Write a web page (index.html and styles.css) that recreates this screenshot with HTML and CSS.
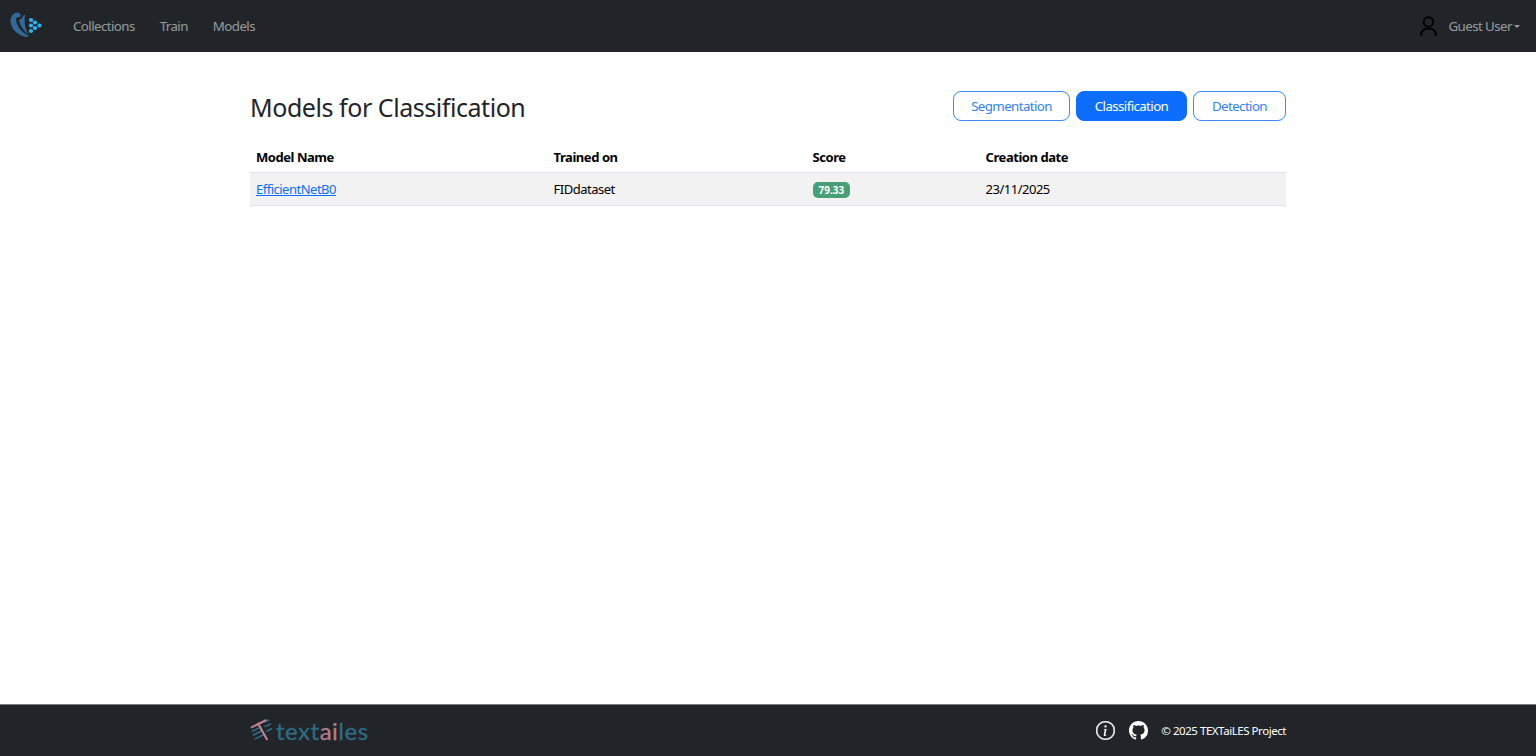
FILE: index.html
```html
<!DOCTYPE html>
<html lang="en">
<head>
<meta charset="utf-8">
<title>Models for Classification</title>
<link rel="stylesheet" href="styles.css">
</head>
<body>
<nav class="navbar">
  <a class="brand" href="#" aria-label="Home">
    <svg class="brand-logo" viewBox="0 0 32 26" width="32" height="26">
      <path d="M.5 9C.5 3 5-.5 9 1 11.500 2 11 5 9 5 7.500 5 6.500 5.500 6 7 6 12 10 20 19 24L17 25C9 24 1 18 .5 9Z" fill="#33699a"/>
      <path d="M9 8C10 8 12 6 14 3L15 3C14 10 15 18 19 23 14 19 10 14 9 8Z" fill="#33699a"/>
      <g fill="#2fb4f2">
        <circle cx="21" cy="8" r="2.100"/><circle cx="21" cy="13.500" r="2.100"/><circle cx="21" cy="19" r="2.100"/>
        <circle cx="25" cy="10.500" r="2.100"/><circle cx="25" cy="16" r="2.100"/><circle cx="29.500" cy="13.500" r="2.100"/>
      </g>
    </svg>
  </a>
  <ul class="nav-links">
    <li><a href="#">Collections</a></li>
    <li><a href="#">Train</a></li>
    <li><a href="#">Models</a></li>
  </ul>
  <div class="user">
    <svg class="user-icon" viewBox="0 0 17 20" width="17" height="20"><circle cx="8.500" cy="6" r="4.800" fill="none" stroke="#000" stroke-width="2"/><path d="M1.200 20 V18.500 C1.200 14.500 4.500 12.500 8.500 12.500 S15.800 14.500 15.800 18.500 V20" fill="none" stroke="#000" stroke-width="2"/></svg>
    <a class="user-name" href="#">Guest User</a>
  </div>
</nav>

<main class="content">
  <header class="head">
    <h1>Models for Classification</h1>
    <div class="tabs">
      <a class="tab" href="#">Segmentation</a>
      <a class="tab active" href="#">Classification</a>
      <a class="tab" href="#">Detection</a>
    </div>
  </header>
  <table class="models">
    <thead>
      <tr><th class="c1">Model Name</th><th class="c2">Trained on</th><th class="c3">Score</th><th>Creation date</th></tr>
    </thead>
    <tbody>
      <tr><td><a href="#">EfficientNetB0</a></td><td>FIDdataset</td><td><span class="badge">79.33</span></td><td>23/11/2025</td></tr>
    </tbody>
  </table>
</main>

<footer class="footer">
  <div class="footer-inner">
    <a class="foot-brand" href="#">
      <svg viewBox="0 0 24 24" width="23" height="23" class="foot-mark">
        <path d="M2 13L12 8M3 17L13 12M5 21L15 16M14 3L20 1M15 8L22 5M17 13L23 10" fill="none" stroke="#2f6b82" stroke-width="1.700"/>
        <path d="M1 9L17 1M8 4L18 22" fill="none" stroke="#c07f92" stroke-width="2.200"/>
      </svg>
      <span class="word"><span class="teal">text</span><span class="pink">ai</span><span class="teal">les</span></span>
    </a>
    <div class="foot-right">
      <svg viewBox="0 0 16 16" width="19" height="19" class="foot-icon info"><path fill="#fff" stroke="#fff" stroke-width=".35" d="M8 15A7 7 0 1 1 8 1a7 7 0 0 1 0 14zm0 1A8 8 0 1 0 8 0a8 8 0 0 0 0 16z"/><path fill="#fff" d="m8.930 6.588-2.290.287-.082.380.450.083c.294.070.352.176.288.469l-.738 3.468c-.194.897.105 1.319.808 1.319.545 0 1.178-.252 1.465-.598l.088-.416c-.200.176-.492.246-.686.246-.275 0-.375-.193-.304-.533L8.930 6.588zM9 4.500a1 1 0 1 1-2 0 1 1 0 0 1 2 0z"/></svg>
      <svg viewBox="0 0 16 16" width="19" height="19" class="foot-icon"><path fill="#fff" d="M8 0C3.580 0 0 3.580 0 8c0 3.540 2.290 6.530 5.470 7.590.4.070.55-.170.55-.380 0-.190-.010-.820-.010-1.490-2.010.370-2.530-.490-2.690-.940-.090-.230-.480-.940-.820-1.130-.280-.150-.680-.520-.010-.530.630-.010 1.080.580 1.230.820.720 1.210 1.870.870 2.330.660.070-.520.280-.870.510-1.070-1.780-.200-3.640-.890-3.640-3.950 0-.870.310-1.590.820-2.150-.080-.200-.360-1.020.080-2.120 0 0 .670-.210 2.200.820.640-.180 1.320-.270 2-.270.680 0 1.360.090 2 .270 1.530-1.040 2.200-.820 2.200-.820.440 1.100.160 1.920.080 2.120.510.560.820 1.270.820 2.150 0 3.070-1.870 3.750-3.650 3.950.290.250.540.730.540 1.480 0 1.070-.010 1.930-.010 2.200 0 .210.150.460.550.380A8.012 8.012 0 0 0 16 8c0-4.420-3.580-8-8-8z"/></svg>
      <span class="copy">© 2025 TEXTaiLES Project</span>
    </div>
  </div>
</footer>
</body>
</html>
```

FILE: styles.css
```css
* { box-sizing: border-box; }
html, body { height: 100%; }
body {
  margin: 0;
  display: flex;
  flex-direction: column;
  min-height: 100vh;
  background: #fff;
  color: #212529;
  font-family: "Noto Sans", "Open Sans", "Liberation Sans", sans-serif;
  font-size: 13px;
  letter-spacing: -.45px;
  overflow: hidden;
}
a { text-decoration: none; }

.navbar {
  flex: 0 0 52px;
  display: flex;
  align-items: center;
  background: #212529;
  padding: 0 16px 0 10px;
}
.brand { display: flex; margin: 0 31px 2px 0; }
.nav-links { display: flex; gap: 25px; list-style: none; margin: 0; padding: 0; flex: 1; }
.nav-links a { color: rgba(255,255,255,.55); font-size: 13.300px; letter-spacing: -.58px; }
.user { display: flex; align-items: center; gap: 11px; }
.user-name { color: rgba(255,255,255,.55); font-size: 13.300px; letter-spacing: -.55px; display: flex; align-items: center; }
.user-name::after {
  content: "";
  margin-left: 2px;
  border-top: 3.500px solid rgba(255,255,255,.55);
  border-left: 3.500px solid transparent;
  border-right: 3.500px solid transparent;
}

.content { flex: 1; width: 1036px; margin: 0 auto; }
.head { display: flex; justify-content: space-between; align-items: flex-start; padding-top: 39px; height: 89px; }
h1 { margin: 0; font-size: 25px; font-weight: 400; line-height: 32px; letter-spacing: -.45px; color: #212529; }
.tabs { display: grid; grid-template-columns: 117px 111px 93px; gap: 6px; }
.tab {
  display: block;
  height: 30px;
  line-height: 28px;
  border: 1px solid #3d8bfd;
  border-radius: 8px;
  color: #2f7ffd;
  font-size: 13.300px;
  letter-spacing: -.6px;
  text-align: center;
}
.tab.active { background: #0d6efd; border-color: #0d6efd; color: #fff; }

.models { width: 100%; border-collapse: collapse; color: #000; }
.models th { text-align: left; font-weight: 700; padding: 1px 6px 0; height: 31px; border-bottom: 1px solid #dee2e6; }
.models td { padding: 0 6px; height: 33px; background: #f2f2f2; border-bottom: 1px solid #dee2e6; letter-spacing: -.5px; }
.models td a { color: #0d6efd; text-decoration: underline; }
.c1 { width: 297.600px; }
.c2 { width: 259px; }
.c3 { width: 173px; }
.models .badge {
  display: inline-block;
  background: #479f76;
  color: #fff;
  font-size: 10px;
  font-weight: 700;
  letter-spacing: 0;
  line-height: 16px;
  padding: 0 6px;
  border-radius: 5px;
}

.footer { flex: 0 0 52px; background: #212529; border-top: 1px solid #7a7d80; }
.footer-inner { width: 1036px; height: 100%; margin: 0 auto; display: flex; align-items: center; justify-content: space-between; }
.foot-brand { display: flex; align-items: center; gap: 3px; }
.word { font-family: "Lato", sans-serif; font-size: 24px; letter-spacing: .5px; line-height: 1; -webkit-text-stroke: .3px; }
.teal { color: #2f6b82; }
.pink { color: #b87a8e; }
.foot-right { display: flex; align-items: center; gap: 13px; }
.info { margin-right: 1px; }
.copy { color: #fff; font-size: 11.500px; letter-spacing: -.45px; }
```
